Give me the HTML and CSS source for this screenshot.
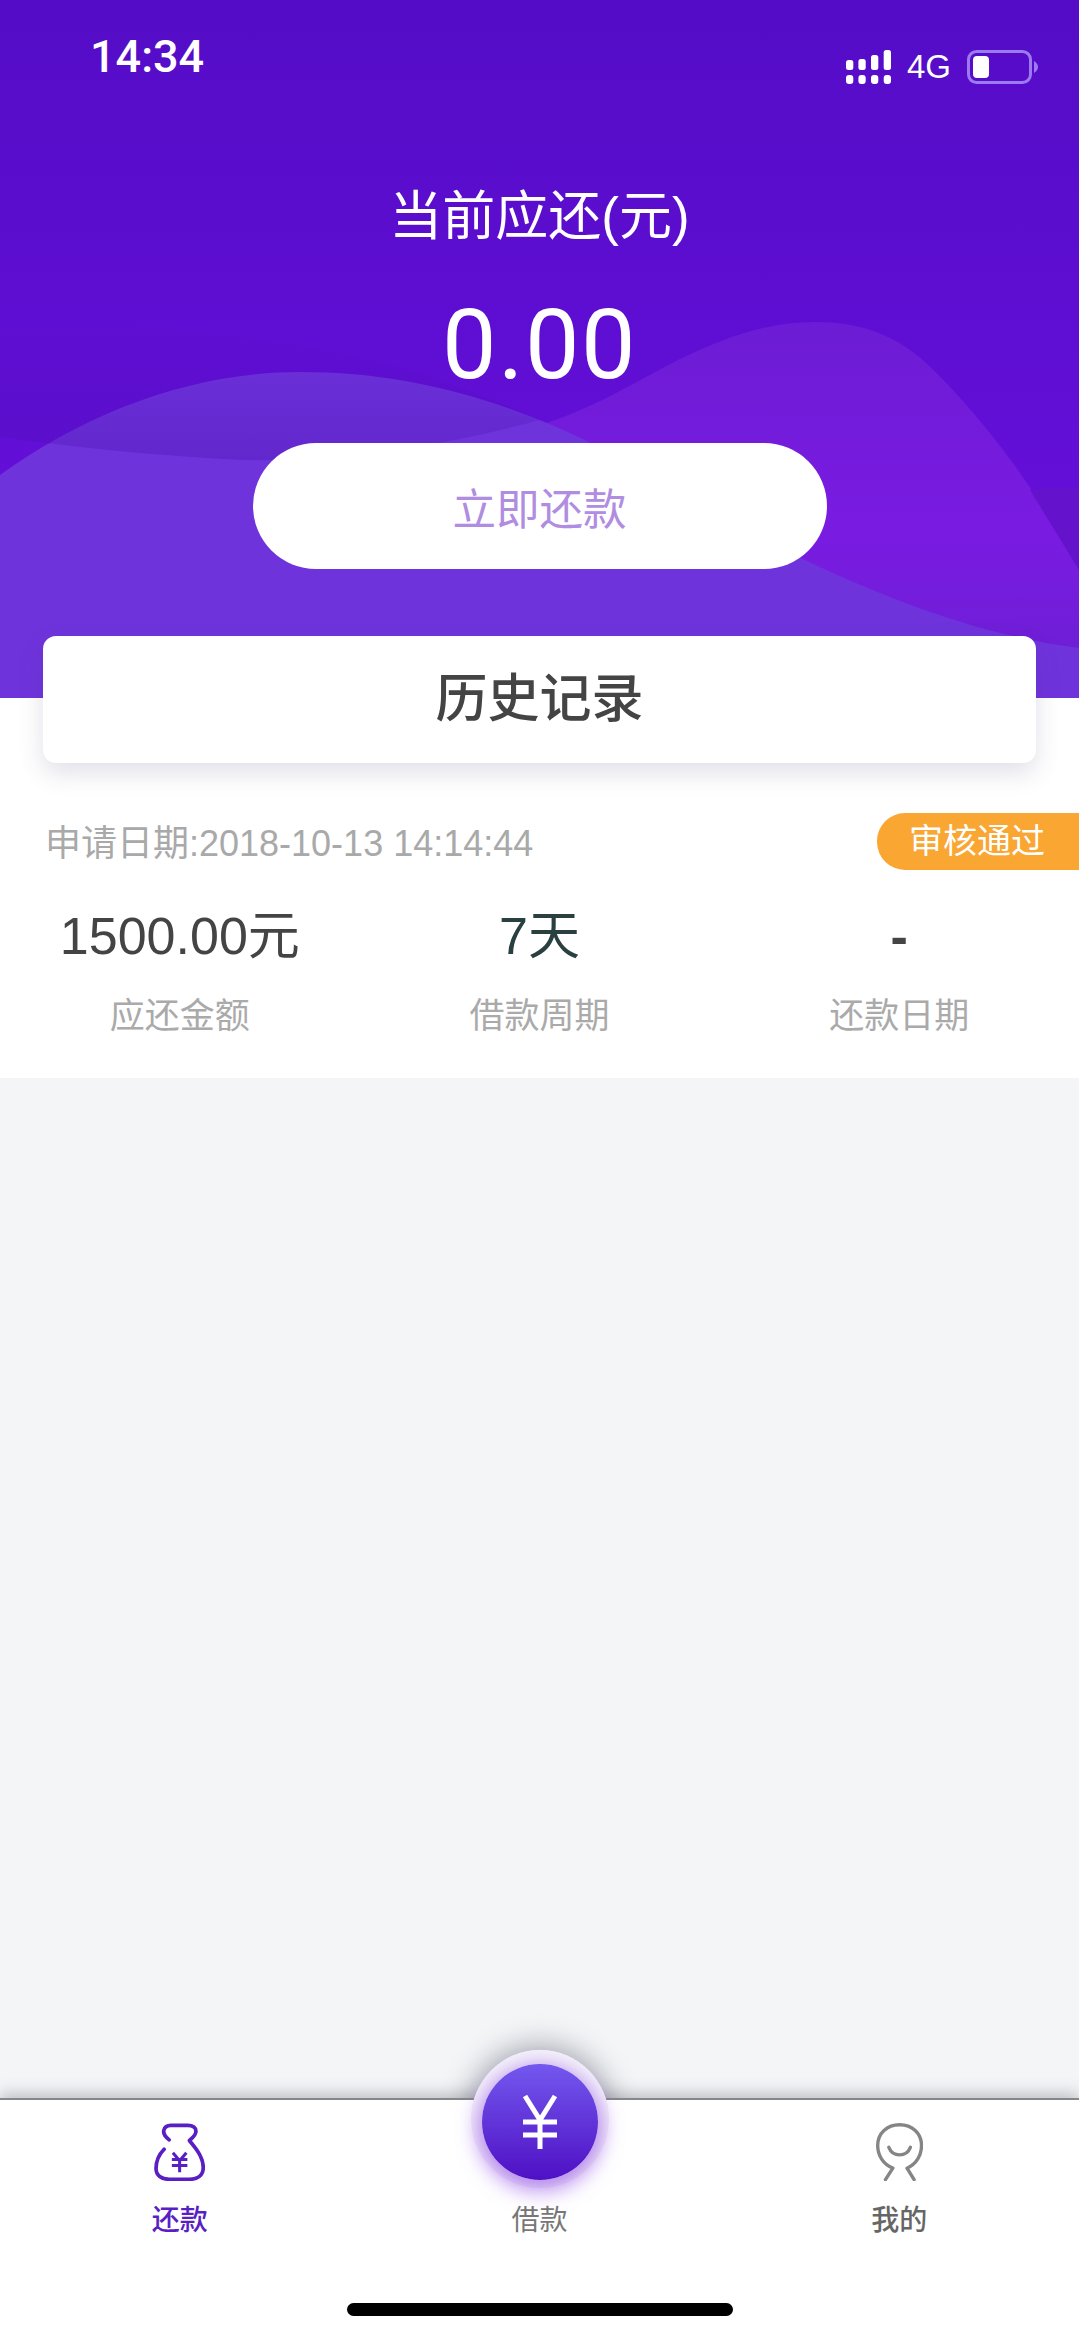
FILE: index.html
```html
<!DOCTYPE html>
<html lang="zh-CN">
<head>
  <meta charset="UTF-8">
  <meta name="viewport" content="width=device-width, initial-scale=1.0">
  <title>还款</title>
  <link rel="stylesheet" href="styles.css">
</head>
<body>
  <div class="page">
    <header class="hero">
      <svg class="hero-waves" viewBox="0 0 1079 698" preserveAspectRatio="none" aria-hidden="true">
        <defs>
          <linearGradient id="bandFill" x1="0" y1="0" x2="0" y2="1">
            <stop offset="0" stop-color="#4a0fb0" stop-opacity="0"/>
            <stop offset="1" stop-color="#4a0fb0" stop-opacity="0.34"/>
          </linearGradient>
          <linearGradient id="rightFill" x1="0" y1="0" x2="0" y2="1">
            <stop offset="0" stop-color="#6c1cd4"/>
            <stop offset="0.55" stop-color="#7a1be2"/>
            <stop offset="1" stop-color="#6a20d2"/>
          </linearGradient>
        </defs>
        <path d="M540 425C590 410 630 385 678 360C730 335 770 322 816 322C860 322 895 335 925 362C955 390 985 425 1012 462C1040 500 1060 535 1079 567L1079 698L540 698Z" fill="url(#rightFill)"/>
        <path d="M1030 490C1045 488 1060 487 1079 487L1079 570Z" fill="#6412cc"/>
        <path d="M0 475C90 410 195 372 300 372C400 372 490 395 585 440C680 490 750 530 805 560C890 600 980 635 1079 648L1079 698L0 698Z" fill="#6f33dc"/>
        <path d="M0 325C120 318 260 335 380 362C440 378 490 398 540 420C450 445 340 462 240 460C150 455 70 447 0 437Z" fill="url(#bandFill)"/>
      </svg>
      <div class="status-bar">
        <span class="status-time">14:34</span>
        <div class="status-icons">
          <svg class="signal" viewBox="0 0 45 34" aria-hidden="true">
            <g fill="#fff">
              <rect x="0" y="10" width="7.3" height="10" rx="2.5"/>
              <rect x="12.4" y="9" width="7.3" height="11" rx="2.5"/>
              <rect x="25" y="5" width="7.3" height="15" rx="2.5"/>
              <rect x="37.7" y="0" width="7.3" height="20" rx="2.5"/>
              <rect x="0" y="25" width="7.3" height="9" rx="3"/>
              <rect x="12.4" y="25" width="7.3" height="9" rx="3"/>
              <rect x="25" y="25" width="7.3" height="9" rx="3"/>
              <rect x="37.7" y="25" width="7.3" height="9" rx="3"/>
            </g>
          </svg>
          <span class="status-net">4G</span>
          <svg class="battery" viewBox="0 0 72 34" aria-hidden="true">
            <rect x="1.5" y="1.5" width="62" height="31" rx="8" fill="none" stroke="#9c7bf0" stroke-width="3"/>
            <rect x="6" y="6" width="16" height="22" rx="4" fill="#fff"/>
            <path d="M67 11C70 13 71 15 71 17C71 19 70 21 67 23Z" fill="#9c7bf0"/>
          </svg>
        </div>
      </div>
      <div class="hero-title">当前应还(元)</div>
      <div class="hero-amount">0.00</div>
      <button class="repay-btn">立即还款</button>
    </header>

    <section class="record">
      <div class="history-card">历史记录</div>
      <div class="record-top">
        <span class="record-date">申请日期:2018-10-13 14:14:44</span>
        <span class="record-status">审核通过</span>
      </div>
      <div class="record-cols">
        <div class="record-col">
          <div class="record-value">1500.00元</div>
          <div class="record-label">应还金额</div>
        </div>
        <div class="record-col">
          <div class="record-value record-value-green">7天</div>
          <div class="record-label">借款周期</div>
        </div>
        <div class="record-col">
          <div class="record-value record-value-dash">-</div>
          <div class="record-label">还款日期</div>
        </div>
      </div>
    </section>

    <main class="empty"></main>

    <nav class="tabbar">
      <div class="tab">
        <svg class="tab-icon" viewBox="0 0 152 172" aria-hidden="true">
          <g fill="none" stroke="#5a1fc4" stroke-width="11" stroke-linecap="round" stroke-linejoin="round">
            <path d="M45 50C35 42 27 35 29 22C31 12 40 7 50 7L100 7C115 7 126 14 124 27C123 38 112 45 105 52C122 72 146 100 146 132C146 155 130 167 105 167L45 167C22 167 6 155 6 135C6 112 16 92 30 78"/>
            <path d="M56 88L76 112L96 88M53 108L99 108M53 126L99 126M76 112L76 146" stroke-width="9" stroke-linecap="butt" stroke-linejoin="miter"/>
          </g>
        </svg>
        <span class="tab-label">还款</span>
      </div>
      <div class="tab tab-center">
        <div class="fab-halo"></div>
        <div class="fab">
          <svg class="fab-icon" viewBox="0 0 36 56" aria-hidden="true">
            <path d="M3 2L18 26L33 2M1 28L35 28M1 41L35 41M18 26L18 55" fill="none" stroke="#fff" stroke-width="5"/>
          </svg>
        </div>
        <span class="tab-label tab-label-light">借款</span>
      </div>
      <div class="tab">
        <svg class="tab-icon" viewBox="0 0 140 172" aria-hidden="true">
          <g fill="none" stroke="#858585" stroke-width="10" stroke-linecap="round" stroke-linejoin="round">
            <path d="M28 168L50 134C20 122 5 95 5 67C5 30 33 5 70 5C107 5 135 30 135 67C135 95 120 122 92 134L113 168"/>
            <path d="M38 72C50 102 90 102 102 72"/>
          </g>
        </svg>
        <span class="tab-label tab-label-me">我的</span>
      </div>
      <div class="home-bar"></div>
    </nav>
  </div>
</body>
</html>
```

FILE: styles.css
```css
* {
  margin: 0;
  padding: 0;
  box-sizing: border-box;
}
body {
  font-family: "Liberation Sans", "Noto Sans CJK SC", sans-serif;
  background-color: #f3f5f7;
}
.page {
  display: flex;
  flex-direction: column;
  height: 2337px;
  overflow: hidden;
}
.hero {
  position: relative;
  display: flex;
  flex-direction: column;
  align-items: center;
  flex: none;
  height: 698px;
  background: linear-gradient(180deg, #540cc6 0%, #6a10e0 100%);
  color: #fff;
}
.hero-waves {
  position: absolute;
  top: 0;
  left: 0;
  width: 100%;
  height: 100%;
}
.status-bar,
.hero-title,
.hero-amount,
.repay-btn {
  position: relative;
}
.status-bar {
  display: flex;
  justify-content: space-between;
  align-items: flex-start;
  width: 100%;
  height: 189px;
  padding: 32px 40px 0 90px;
}
.status-time {
  font-family: Roboto, "Liberation Sans", sans-serif;
  font-size: 45px;
  font-weight: 500;
  line-height: 50px;
}
.status-icons {
  display: flex;
  align-items: center;
  gap: 16px;
  padding-top: 17px;
}
.signal {
  width: 45px;
  height: 34px;
}
.status-net {
  font-size: 33px;
  line-height: 36px;
}
.battery {
  width: 72px;
  height: 34px;
}
.hero-title {
  font-size: 53px;
  line-height: 56px;
}
.hero-amount {
  margin-top: 45px;
  font-family: Roboto, "Liberation Sans", sans-serif;
  font-size: 97px;
  letter-spacing: 1.5px;
  line-height: 110px;
}
.repay-btn {
  width: 574px;
  height: 126px;
  margin-top: 43px;
  border: none;
  border-radius: 63px;
  background-color: #fff;
  color: #b08de0;
  font-family: inherit;
  font-size: 43.5px;
}
.history-card {
  position: relative;
  width: 993px;
  height: 127px;
  margin: -62px 0 0 43px;
  border-radius: 13px;
  background-color: #fff;
  box-shadow: 0 10px 24px rgba(70, 60, 110, 0.16);
  color: #444;
  font-size: 52px;
  font-weight: 500;
  line-height: 127px;
  text-align: center;
}
.record {
  flex: none;
  height: 380px;
  background-color: #fff;
}
.record-top {
  display: flex;
  justify-content: space-between;
  align-items: center;
  padding: 50px 0 0 45px;
}
.record-date {
  padding-bottom: 4px;
  color: #a9a9a9;
  font-size: 36px;
}
.record-status {
  width: 202px;
  height: 57px;
  border-radius: 28px 0 0 28px;
  background-color: #f9a633;
  color: #fff;
  font-size: 34px;
  line-height: 57px;
  padding-left: 32px;
}
.record-cols {
  display: grid;
  grid-template-columns: repeat(3, 1fr);
  margin-top: 33px;
  text-align: center;
}
.record-value {
  color: #444;
  font-size: 52px;
  line-height: 66px;
}
.record-value-green {
  color: #2a4040;
}
.record-value-dash {
  font-weight: 700;
}
.record-label {
  margin-top: 22px;
  color: #aaa;
  font-size: 35px;
  line-height: 50px;
}
.empty {
  flex: 1;
}
.tabbar {
  position: relative;
  display: grid;
  grid-template-columns: repeat(3, 1fr);
  flex: none;
  height: 239px;
  border-top: 2px solid #85878a;
  background-color: #fff;
  box-shadow: 0 -4px 14px rgba(80, 85, 95, 0.34);
}
.tab {
  display: flex;
  flex-direction: column;
  align-items: center;
  padding-top: 23px;
}
.tab-icon {
  height: 58px;
}
.tab-label {
  margin-top: 22px;
  color: #5a1fc4;
  font-size: 28px;
  font-weight: 500;
  line-height: 36px;
}
.tab-label-light {
  color: #777;
  font-weight: 400;
}
.tab-label-me {
  color: #666;
}
.tab-center {
  padding-top: 81px;
}
.fab {
  position: absolute;
  top: -36px;
  left: 50%;
  display: flex;
  justify-content: center;
  align-items: center;
  width: 116px;
  height: 116px;
  margin-left: -58px;
  border-radius: 50%;
  background: linear-gradient(180deg, #7358ee 0%, #4f10c4 100%);
  box-shadow: 0 6px 20px 5px rgba(130, 50, 225, 0.55), 0 -3px 0 11px #f6f4fa;
}
/* grey glow only above the bar, so it sits behind the bar's background */
.fab-halo {
  position: absolute;
  top: -50px;
  left: 50%;
  width: 136px;
  height: 136px;
  margin-left: -68px;
  border-radius: 50%;
  box-shadow: 0 0 26px 8px rgba(90, 95, 105, 0.4);
  z-index: -1;
}
.fab-icon {
  width: 36px;
  height: 56px;
}
.home-bar {
  position: absolute;
  bottom: 21px;
  left: 347px;
  width: 386px;
  height: 13px;
  border-radius: 7px;
  background-color: #000;
}
```
